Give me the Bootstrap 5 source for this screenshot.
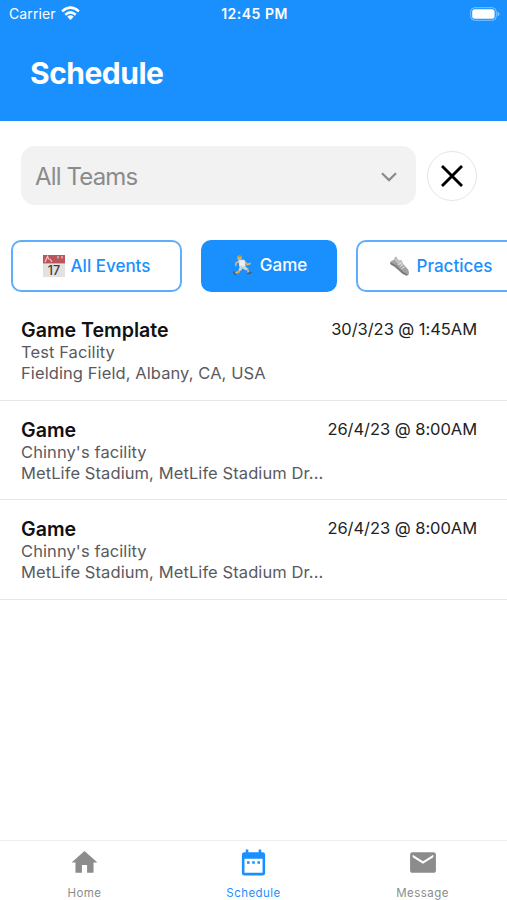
<!DOCTYPE html>
<html lang="en">
<head>
<meta charset="utf-8">
<meta name="viewport" content="width=device-width, initial-scale=1">
<title>Schedule</title>
<link href="https://cdn.jsdelivr.net/npm/bootstrap@5.3.0/dist/css/bootstrap.min.css" rel="stylesheet">
<style>
  :root { --brand: #1a90ff; }
  body { font-family: Inter, "Liberation Sans", sans-serif; height: 900px; background: #fff; color: #111; }
  svg { display: block; flex: none; }
  .app-header { height: 121px; background: var(--brand); }
  .status-bar { height: 27px; padding: 0 7px 0 9px; font-size: 14px; line-height: 27px; }
  .status-bar > * { flex: 1 1 0; }
  .carrier { letter-spacing: .12px; }
  .clock { font-weight: 600; font-size: 14px; letter-spacing: .5px; }
  .screen-title { font-size: 30px; line-height: 36px; font-weight: 700; letter-spacing: -.5px; margin: 28px 0 0 30px; }
  .filter-row { padding: 25px 30px 0 21px; gap: 11px; }
  .team-select { height: 59px; border-radius: 14px; background: #f2f2f2; color: #8b8b8b; font-size: 24px; letter-spacing: -.85px; padding: 2px 19px 0 14px; }
  .clear-btn { width: 50px; height: 50px; border: 1px solid #e6e6e6; background: #fff; flex: none; }
  .pill-row { padding: 35px 0 0 11px; gap: 19px; }
  .pill { height: 52px; border: 2px solid #60aefb; border-radius: 10px; color: var(--brand); background: #fff; font-size: 17px; font-weight: 500; flex: none; line-height: 20px; gap: 6px; padding: 0; }
  .pill.is-on { background: var(--brand); border-color: var(--brand); color: #fff; padding: 0 0 2px 2px; gap: 8px; }
  .pill-events { width: 171px; }
  .pill-game { width: 136px; }
  .pill-practice { width: 169px; gap: 7px; }
  .event-list { padding-top: 9px; }
  .event { height: 99.5px; padding: 17px 30px 0 21px; border-bottom: 1px solid #e6e6e6; }
  .event-title { font-size: 19.6px; line-height: 24px; font-weight: 600; }
  .event-line { font-size: 16.5px; line-height: 21px; letter-spacing: .09px; color: #5a5a5e; }
  .event-date { font-size: 16.5px; line-height: 22px; letter-spacing: -.05px; color: #222; }
  .tab-bar { height: 60px; border-top: 1px solid #eee; }
  .tab { flex: 1 1 0; color: #8c8c8c; font-size: 11.5px; line-height: 14px; letter-spacing: .45px; padding-top: 6px; gap: 8px; }
  .tab.is-on { color: var(--brand); }
</style>
</head>
<body class="d-flex flex-column overflow-hidden">
<header class="app-header text-white">
  <div class="status-bar d-flex align-items-center">
    <div class="d-flex align-items-center">
      <span class="carrier">Carrier</span>
      <svg class="ms-1" width="21" height="15" viewBox="0 0 20 15" fill="none" stroke="#fff" stroke-width="2.5">
        <path d="M1.6 5.4Q10-2.2 18.4 5.4M4.8 8.7Q10 4 15.2 8.7"/>
        <path d="M6.8 10.7Q10 8 13.2 10.7L10 14Z" fill="#fff" stroke="none"/>
      </svg>
    </div>
    <div class="clock text-center">12:45 PM</div>
    <div class="d-flex justify-content-end">
      <svg width="30" height="14" viewBox="0 0 30 14">
        <rect x=".7" y=".7" width="25.6" height="12.6" rx="4" fill="none" stroke="#fff" stroke-opacity=".45"/>
        <rect x="2.2" y="2.3" width="22.4" height="9.4" rx="2.5" fill="#fff"/>
        <path d="M27.5 4.7Q29.5 5.3 29.5 7T27.5 9.3Z" fill="#fff" fill-opacity=".45"/>
      </svg>
    </div>
  </div>
  <h1 class="screen-title">Schedule</h1>
</header>

<main class="flex-grow-1">
  <div class="filter-row d-flex align-items-center">
    <div class="team-select d-flex align-items-center justify-content-between flex-grow-1" role="button">
      <span>All Teams</span>
      <svg width="16" height="10" viewBox="0 0 16 10" fill="none" stroke="#8b8b8b" stroke-width="2.2"><path d="M1 1.2 8 8.1 15 1.2"/></svg>
    </div>
    <button class="clear-btn rounded-circle p-0 d-flex align-items-center justify-content-center" aria-label="Clear">
      <svg width="22" height="22" viewBox="0 0 22 22" stroke="#000" stroke-width="2.9"><path d="M1 1 21 21M21 1 1 21"/></svg>
    </button>
  </div>

  <div class="pill-row d-flex overflow-hidden">
    <button class="btn pill pill-events d-flex align-items-center justify-content-center">
      <svg width="22" height="22" viewBox="0 0 22 22">
        <rect width="22" height="22" fill="#e4e2e0"/>
        <rect width="22" height="8.4" fill="#b9555c"/>
        <path d="M2 7 4.5 1.5 6 4.5M7 4 9 7M15 1v2.5M19 1v2.5" stroke="#ecc9ca" stroke-width="1.2" fill="none"/>
        <text x="11" y="19.6" text-anchor="middle" font-size="12.5" font-weight="500" fill="#3d3d3d">17</text>
      </svg>
      <span>All Events</span>
    </button>
    <button class="btn pill pill-game is-on d-flex align-items-center justify-content-center">
      <svg width="19" height="21" viewBox="0 0 19 21" fill="none" stroke-linecap="round" stroke-linejoin="round">
        <path d="M7 6 3.2 7.7 2.7 10.4M11.8 6.5 14.2 9.6 17 8.6" stroke="#d9b474" stroke-width="1.7"/>
        <path d="M7 13.5 5.8 16.8 2 18.2M11 13 14.5 14.3 15.5 17.5" stroke="#d6ac6c" stroke-width="2"/>
        <path d="M6.2 5.5 11 5.1 12.2 11.4 7.4 12Z" fill="#e9eef0" stroke="#e9eef0" stroke-width="1"/>
        <path d="M8.2 12.5 7.2 14.4M10.3 12.2 13 13.8" stroke="#c8d5da" stroke-width="2.8"/>
        <circle cx="6.5" cy="2.8" r="2.4" fill="#d8b36d"/>
        <path d="M4.3 2.5Q5-.1 8.5.9L8.7 2.3Z" fill="#ad9c3c"/>
        <path d="M.9 17.2 2.4 19.6M15 18.6 17.9 17.5" stroke="#44596c" stroke-width="1.6"/>
      </svg>
      <span>Game</span>
    </button>
    <button class="btn pill pill-practice d-flex align-items-center justify-content-center">
      <svg width="21" height="21" viewBox="0 0 21 21">
        <path d="M1 6.2Q1.5 4.7 5 3.7Q5.7.8 7.4.5Q8.4 4.2 11 4.5L12.2 4Q13.8 8.8 17.5 11.8Q20.4 14.2 19.9 18.2L17.8 20Q12.4 18.2 8.8 13.8Q5.7 10.4 2.2 9Z" fill="#a3a2a0"/>
        <path d="M7.4.7Q8.4 4.2 11 4.5L12.2 4 14.8 9.2 9.8 8.7 5.3 4Z" fill="#c4c3c0"/>
        <path d="M1.3 7.4Q7 9.1 10.4 13.5Q13.8 17.3 18.2 18.9" stroke="#747371" stroke-width="1.2" fill="none"/>
        <path d="M9.3 8.6 12.4 7.1M10.8 10.6 14 9M12.5 12.4 15.6 11" stroke="#e8e8e6" stroke-width=".9"/>
      </svg>
      <span>Practices</span>
    </button>
  </div>

  <div class="event-list">
    <div class="event d-flex justify-content-between align-items-start">
      <div>
        <div class="event-title">Game Template</div>
        <div class="event-line">Test Facility</div>
        <div class="event-line">Fielding Field, Albany, CA, USA</div>
      </div>
      <div class="event-date text-nowrap">30/3/23 @ 1:45AM</div>
    </div>
    <div class="event d-flex justify-content-between align-items-start">
      <div class="text-nowrap">
        <div class="event-title">Game</div>
        <div class="event-line">Chinny's facility</div>
        <div class="event-line">MetLife Stadium, MetLife Stadium Dr...</div>
      </div>
      <div class="event-date text-nowrap">26/4/23 @ 8:00AM</div>
    </div>
    <div class="event d-flex justify-content-between align-items-start">
      <div class="text-nowrap">
        <div class="event-title">Game</div>
        <div class="event-line">Chinny's facility</div>
        <div class="event-line">MetLife Stadium, MetLife Stadium Dr...</div>
      </div>
      <div class="event-date text-nowrap">26/4/23 @ 8:00AM</div>
    </div>
  </div>
</main>

<nav class="tab-bar d-flex flex-shrink-0">
  <div class="tab d-flex flex-column align-items-center">
    <svg width="31" height="31" viewBox="0 0 24 24" fill="currentColor"><path d="M10 20v-6h4v6h5v-8h3L12 3 2 12h3v8z"/></svg>
    <span>Home</span>
  </div>
  <div class="tab is-on d-flex flex-column align-items-center">
    <svg width="31" height="31" viewBox="0 0 24 24" fill="currentColor"><path d="M9 11H7v2h2zm4 0h-2v2h2zm4 0h-2v2h2zm2-7h-1V2h-2v2H8V2H6v2H5a2 2 0 0 0-2 2v14a2 2 0 0 0 2 2h14a2 2 0 0 0 2-2V6a2 2 0 0 0-2-2zm0 16H5V9h14z"/></svg>
    <span>Schedule</span>
  </div>
  <div class="tab d-flex flex-column align-items-center">
    <svg width="32" height="31" viewBox="0 0 24 24" fill="currentColor"><path d="M20 4H4a2 2 0 0 0-2 2v12a2 2 0 0 0 2 2h16a2 2 0 0 0 2-2V6a2 2 0 0 0-2-2zm0 4-8 5-8-5V6l8 5 8-5z"/></svg>
    <span>Message</span>
  </div>
</nav>
<script src="https://cdn.jsdelivr.net/npm/bootstrap@5.3.0/dist/js/bootstrap.bundle.min.js"></script>
</body>
</html>
